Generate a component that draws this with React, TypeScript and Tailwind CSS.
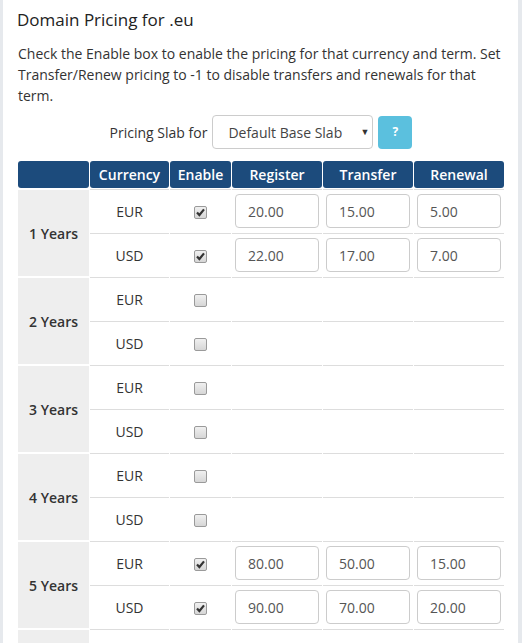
import React from 'react';

type Row = { cur: string; on: boolean; reg?: string; tra?: string; ren?: string };
type Term = { years: number; rows: Row[] };

const terms: Term[] = [
  { years: 1, rows: [{ cur: 'EUR', on: true, reg: '20.00', tra: '15.00', ren: '5.00' }, { cur: 'USD', on: true, reg: '22.00', tra: '17.00', ren: '7.00' }] },
  { years: 2, rows: [{ cur: 'EUR', on: false }, { cur: 'USD', on: false }] },
  { years: 3, rows: [{ cur: 'EUR', on: false }, { cur: 'USD', on: false }] },
  { years: 4, rows: [{ cur: 'EUR', on: false }, { cur: 'USD', on: false }] },
  { years: 5, rows: [{ cur: 'EUR', on: true, reg: '80.00', tra: '50.00', ren: '15.00' }, { cur: 'USD', on: true, reg: '90.00', tra: '70.00', ren: '20.00' }] },
  { years: 6, rows: [{ cur: 'EUR', on: false }, { cur: 'USD', on: false }] },
];

function Checkbox({ checked }: { checked: boolean }) {
  return (
    <span className="inline-flex w-[13px] h-[13px] items-center justify-center rounded-[2px] border border-[#9a9a9a] bg-gradient-to-b from-[#f0f0f0] to-[#d6d6d6] align-middle">
      {checked && (
        <svg width="9" height="9" viewBox="0 0 9 9">
          <path d="M1 4.4 L3.4 7 L8 1.4" fill="none" stroke="#333" strokeWidth="2.2" />
        </svg>
      )}
    </span>
  );
}

function PriceInput({ value }: { value?: string }) {
  if (!value) return null;
  return (
    <input
      readOnly
      value={value}
      className="w-[84px] h-[34px] rounded-[4px] border border-[#cccccc] bg-white px-[12px] text-[14px] text-[#555] outline-none align-middle"
    />
  );
}

export default function App() {
  const head = 'bg-[#1c4b7c] text-white font-semibold text-[14px] rounded-[3px] h-[27px] text-center align-middle';
  const cell = 'border-t border-[#dddddd] h-[43px] text-center align-middle';

  return (
    <div className="w-[522px] h-[643px] overflow-hidden flex bg-white text-[#333] font-['Open_Sans',sans-serif]">
      <div className="w-[3px] shrink-0 bg-[#e6e9ed]" />
      <div className="flex-1 pl-[14px] pt-[7px]">
        <h3 className="text-[17px] leading-[26px] text-[#222] font-normal">Domain Pricing for .eu</h3>
        <p className="mt-[10px] text-[14px] leading-[21px] pl-px pr-[8px]">
          Check the Enable box to enable the pricing for that currency and term. Set Transfer/Renew pricing to -1 to disable transfers and renewals for that term.
        </p>

        <div className="mt-[9px] flex items-center justify-center gap-[5px] w-[488px]">
          <span className="text-[14px]">Pricing Slab for</span>
          <div className="relative w-[161px] h-[34px] rounded-[4px] border border-[#cccccc] bg-white flex items-center pl-[15px] text-[14px] text-[#444]">
            Default Base Slab
            <span className="absolute right-[3px] top-[9px] text-[9px] text-[#333]">▼</span>
          </div>
          <button className="w-[34px] h-[33px] rounded-[4px] bg-[#5bc0de] text-white text-[12px] font-bold">?</button>
        </div>

        <table className="mt-[11px] w-[488px] border-separate border-spacing-[1px] table-fixed">
          <colgroup>
            <col className="w-[71px]" />
            <col className="w-[79px]" />
            <col className="w-[61px]" />
            <col className="w-[90px]" />
            <col className="w-[90px]" />
            <col className="w-[90px]" />
          </colgroup>
          <thead>
            <tr>
              <th className={head}></th>
              <th className={head}>Currency</th>
              <th className={head}>Enable</th>
              <th className={head}>Register</th>
              <th className={head}>Transfer</th>
              <th className={head}>Renewal</th>
            </tr>
          </thead>
          <tbody className="text-[14px]">
            {terms.map((t) =>
              t.rows.map((r, i) => (
                <tr key={`${t.years}-${r.cur}`}>
                  {i === 0 && (
                    <td rowSpan={2} className="bg-[#eeeeee] border-t border-white text-center align-middle font-semibold">
                      {t.years} Years
                    </td>
                  )}
                  <td className={cell}>{r.cur}</td>
                  <td className={cell}>
                    <Checkbox checked={r.on} />
                  </td>
                  <td className={cell}>
                    <PriceInput value={r.reg} />
                  </td>
                  <td className={cell}>
                    <PriceInput value={r.tra} />
                  </td>
                  <td className={cell}>
                    <PriceInput value={r.ren} />
                  </td>
                </tr>
              ))
            )}
          </tbody>
        </table>
      </div>
      <div className="w-[4px] shrink-0 bg-[#e6e9ed]" />
    </div>
  );
}
